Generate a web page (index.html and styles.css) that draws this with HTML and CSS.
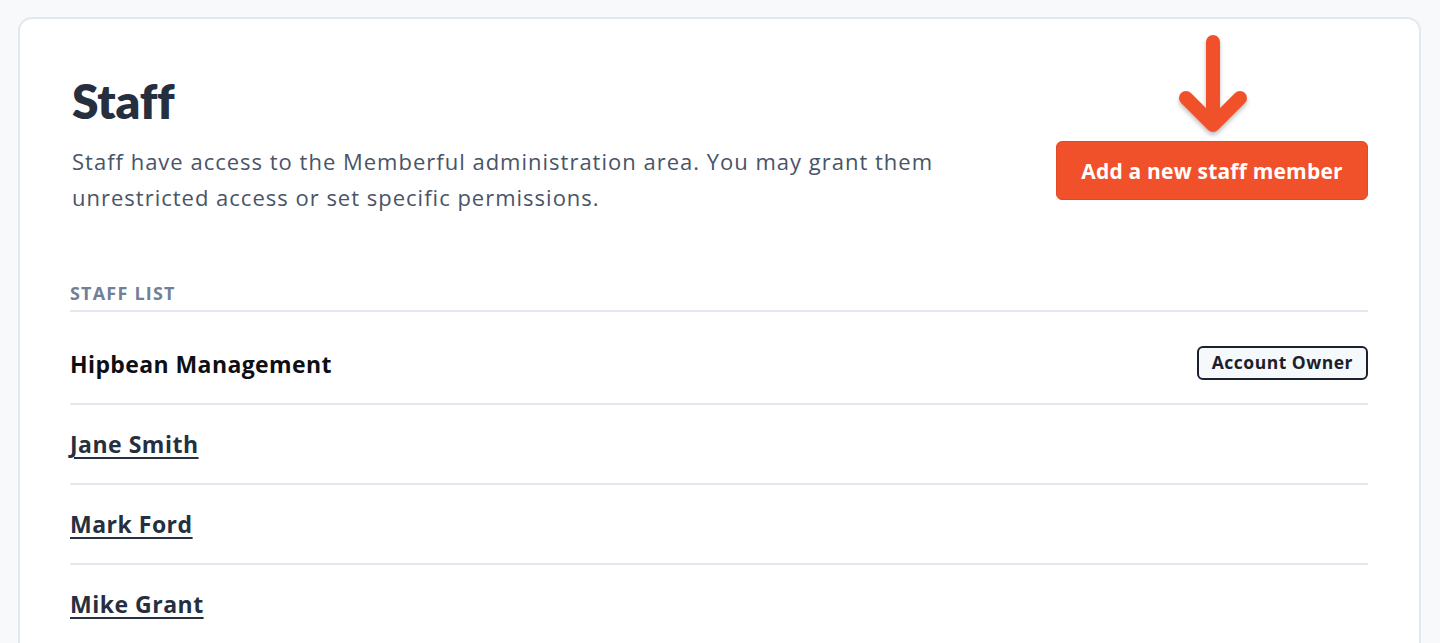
FILE: index.html
```html
<!DOCTYPE html>
<html>
<head>
<meta charset="utf-8">
<link rel="stylesheet" href="styles.css">
</head>
<body>
<div class="card">
  <div class="header">
    <div class="intro">
      <h1 class="title">Staff</h1>
      <p class="desc">Staff have access to the Memberful administration area. You may grant them unrestricted access or set specific permissions.</p>
    </div>
    <div class="action">
      <svg class="arrow" width="80" height="110" viewBox="0 0 80 110">
        <defs>
          <filter id="sh" x="-30%" y="-30%" width="160%" height="160%">
            <feDropShadow dx="0" dy="3" stdDeviation="2" flood-color="#000" flood-opacity="0.25"/>
          </filter>
        </defs>
        <g filter="url(#sh)" stroke="#f0512a" stroke-width="14" stroke-linecap="round" stroke-linejoin="round" fill="none">
          <path d="M41 9 V 86"/>
          <path d="M14 65 L41 92 L68 65"/>
        </g>
      </svg>
      <button class="btn">Add a new staff member</button>
    </div>
  </div>
  <div class="list">
    <div class="list-head">STAFF LIST</div>
    <div class="row"><span class="owner-name">Hipbean Management</span><span class="badge">Account Owner</span></div>
    <div class="row"><a class="name" href="#">Jane Smith</a></div>
    <div class="row"><a class="name" href="#">Mark Ford</a></div>
    <div class="row"><a class="name" href="#">Mike Grant</a></div>
  </div>
</div>
</body>
</html>
```
FILE: styles.css
```css
html, body {
  margin: 0;
  padding: 0;
  background: #f8f9fb;
  font-family: "Open Sans", "Lato", sans-serif;
}
body {
  padding: 17px 19px 0 18px;
  height: 643px;
  box-sizing: border-box;
  overflow: hidden;
}
.card {
  background: #fff;
  border: 2px solid #e3e8f0;
  border-radius: 14px;
  padding: 0 51px 0 50px;
  min-height: 700px;
}
.header {
  display: flex;
  justify-content: space-between;
  align-items: flex-start;
}
.intro {
  padding-top: 52px;
}
.title {
  margin: 0 0 0 2px;
  font-family: "Lato", sans-serif;
  font-size: 48px;
  font-weight: 800;
  color: #262f40;
  line-height: 60px;
  letter-spacing: -0.2px;
}
.desc {
  margin: 12px 0 0 2px;
  font-size: 22px;
  line-height: 36px;
  letter-spacing: 1px;
  color: #495468;
  width: 900px;
}
.action {
  display: flex;
  flex-direction: column;
  align-items: center;
  padding-top: 14px;
}
.arrow {
  display: block;
  height: 110px;
}
.btn {
  margin-top: -2px;
  width: 312px;
  height: 59px;
  background: #f0512a;
  color: #fff;
  border: 1px solid #e24a25;
  border-radius: 6px;
  font-family: inherit;
  font-size: 21px;
  font-weight: 700;
  letter-spacing: 0.2px;
  cursor: pointer;
}
.list {
  margin-top: 65px;
}
.list-head {
  font-size: 18px;
  font-weight: 700;
  color: #718096;
  letter-spacing: 1.2px;
  padding-bottom: 4px;
  border-bottom: 2px solid #e3e8f0;
  line-height: 26px;
}
.list-head + .row {
  margin-top: 13px;
}
.row {
  height: 78px;
  border-bottom: 2px solid #e3e8f0;
  display: flex;
  align-items: center;
  justify-content: space-between;
}
.owner-name {
  font-size: 23px;
  font-weight: 700;
  letter-spacing: 0.4px;
  color: #0d0f14;
}
.name {
  font-size: 23px;
  font-weight: 700;
  letter-spacing: 0.5px;
  color: #262f40;
  text-decoration: underline;
  text-underline-offset: 4px;
  text-decoration-thickness: 2px;
}
.badge {
  border: 2px solid #1a202c;
  border-radius: 6px;
  background: #f5f9fc;
  padding: 2px 13px 3px;
  margin-top: -3px;
  line-height: 25px;
  font-size: 17.5px;
  font-weight: 700;
  color: #1a202c;
  letter-spacing: 0.5px;
}
```
